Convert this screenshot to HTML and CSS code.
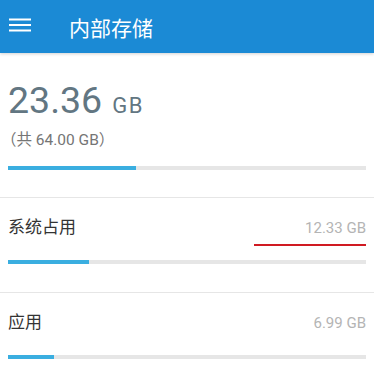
FILE: index.html
```html
<!DOCTYPE html>
<html lang="zh">
<head>
<meta charset="utf-8">
<link rel="stylesheet" href="styles.css">
</head>
<body>
<header class="appbar">
  <svg class="menu" width="22" height="14" viewBox="0 0 22 14"><rect x="0" y="0.5" width="22" height="2" fill="#fff"/><rect x="0" y="6" width="22" height="2" fill="#fff"/><rect x="0" y="11.5" width="22" height="2" fill="#fff"/></svg>
  <div class="title">内部存储</div>
</header>
<section class="summary">
  <div class="used"><span class="num">23.36</span><span class="unit">GB</span></div>
  <div class="total">（共 64.00 GB）</div>
  <div class="bar"><div class="fill" style="width:35.8%"></div></div>
</section>
<section class="item">
  <div class="row"><span class="label">系统占用</span><span class="value">12.33 GB</span></div>
  <div class="mark"></div>
  <div class="bar"><div class="fill" style="width:22.6%"></div></div>
</section>
<section class="item">
  <div class="row"><span class="label">应用</span><span class="value">6.99 GB</span></div>
  <div class="mark none"></div>
  <div class="bar"><div class="fill" style="width:12.9%"></div></div>
</section>
</body>
</html>
```
FILE: styles.css
```css
html, body {
  margin: 0;
  padding: 0;
  background: #fff;
  font-family: Roboto, "Noto Sans CJK SC", sans-serif;
  overflow: hidden;
}
.appbar {
  height: 53px;
  background: #1b8ad5;
  display: flex;
  align-items: center;
  box-shadow: 0 1px 3px rgba(0,0,0,0.18);
  position: relative;
}
.menu {
  margin-left: 9px;
  margin-top: -3px;
  display: block;
}
.title {
  margin-left: 38px;
  color: #fff;
  font-size: 21px;
  line-height: 24px;
  font-family: "Noto Sans CJK SC", sans-serif;
}
.summary {
  padding: 25px 8px 27px;
}
.used {
  line-height: 44px;
  color: #627682;
}
.num {
  font-size: 37.5px;
}
.unit {
  font-size: 22px;
  margin-left: 10px;
  letter-spacing: 1.5px;
}
.total {
  margin-top: 0;
  line-height: 20px;
  font-size: 15.5px;
  color: #757575;
  margin-left: -7px;
}
.bar {
  height: 4px;
  background: #e6e6e6;
  margin-top: 16px;
}
.fill {
  height: 100%;
  background: #3aaee0;
}
.item {
  border-top: 1px solid #e6e6e6;
  padding: 17px 8px 28px;
  display: flex;
  flex-direction: column;
}
.row {
  display: flex;
  justify-content: space-between;
  align-items: baseline;
  height: 24px;
  line-height: 24px;
}
.label {
  font-size: 17px;
  color: #333;
}
.value {
  font-size: 15px;
  color: #b4b4b4;
}
.mark {
  align-self: flex-end;
  width: 112px;
  height: 2px;
  margin-top: 5px;
  background: #d01a22;
}
.mark.none {
  background: transparent;
}
.item .bar {
  margin-top: 14px;
}
```
